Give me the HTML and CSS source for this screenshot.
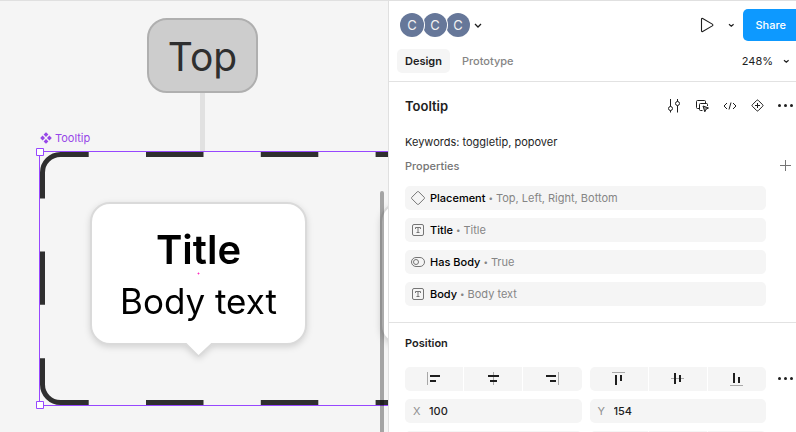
FILE: index.html
```html
<!DOCTYPE html>
<html lang="en">
<head>
<meta charset="utf-8">
<title>Tooltip</title>
<link rel="stylesheet" href="styles.css">
</head>
<body>
<div class="app">
  <main class="canvas">
    <div class="connector"></div>
    <div class="node">Top</div>
    <div class="frame-label">
      <svg width="12" height="12" viewBox="0 0 12 12" fill="currentColor"><path d="M6 .2 8.4 2.6 6 5 3.6 2.6zM6 7l2.4 2.4L6 11.800 3.600 9.400zM2.600 3.600 5 6 2.600 8.400.200 6zM9.400 3.600 11.800 6 9.400 8.400 7 6z"/></svg>
      <span>Tooltip</span>
    </div>
    <svg class="drawing" width="620" height="290" viewBox="0 140 620 290" fill="none">
      <g stroke="#2f2f2f" stroke-width="5">
        <path d="M42.500 198.500V172.500a18 18 0 0 1 18-18H88.700M42.500 251.500v53.300M42.500 358.300v26.200a18 18 0 0 0 18 18H88.700"/>
        <path d="M146 154.500H600M146 402.500H600" stroke-dasharray="57.500 57.300"/>
      </g>
      <g class="bubble">
        <path id="bubble" d="M110 203H287a19 19 0 0 1 19 19V325a19 19 0 0 1-19 19H212L198.500 356 185 344H110a19 19 0 0 1-19-19V222a19 19 0 0 1 19-19z"/>
        <use href="#bubble" x="290"/>
      </g>
      <g fill="#fff">
        <path id="face" d="M110 204H287a18 18 0 0 1 18 18V325a18 18 0 0 1-18 18H211.300L198.500 355 186.500 343H110a18 18 0 0 1-18-18V222a18 18 0 0 1 18-18z"/>
        <use href="#face" x="290"/>
      </g>
      <path d="M197.500 273.500h2M198.500 272.500v2" stroke="#ff24bd" stroke-opacity=".8"/>
      <path d="M600 151.500H39.500V405.500H600" stroke="#9747ff"/>
      <path d="M36.500 148.500h7v7h-7zM36.500 401.500h7v7h-7z" fill="#fff" stroke="#9747ff"/>
    </svg>
    <div class="tooltip-text">
      <div class="tooltip-title">Title</div>
      <div class="tooltip-body">Body text</div>
    </div>
    <div class="scrollbar"></div>
  </main>

  <aside class="panel">
    <header class="topbar">
      <div class="row people">
        <div class="avatars"><span class="avatar">C</span><span class="avatar">C</span><span class="avatar">C</span></div>
        <button class="icon small" aria-label="Collaborators"><svg width="16" height="16" viewBox="0 0 16 16"><path d="M5 7l3 3 3-3" stroke-width="1.300"/></svg></button>
        <span class="spacer"></span>
        <button class="icon play" aria-label="Present"><svg width="24" height="24" viewBox="0 0 24 24"><path d="M6.500 6.300v11.400q0 1.300 1.200.7l9.600-5.500q1.200-.9 0-1.800L7.700 5.600q-1.200-.6-1.200.7z" stroke-width="1.100"/></svg></button>
        <button class="icon small" aria-label="Present options"><svg width="16" height="16" viewBox="0 0 16 16"><path d="M6 7.200l2.300 2 2.300-2" stroke-width="1.200"/></svg></button>
        <button class="share">Share</button>
      </div>
      <div class="row tabs">
        <button class="tab active">Design</button>
        <button class="tab">Prototype</button>
        <span class="spacer"></span>
        <button class="zoom">248%<svg width="16" height="16" viewBox="0 0 16 16"><path d="M6 7.200l2.300 2 2.300-2" stroke-width="1.200"/></svg></button>
      </div>
    </header>

    <section class="component">
      <div class="row title-row">
        <h1>Tooltip</h1>
        <div class="actions">
          <button class="icon" aria-label="Configure"><svg width="22" height="22" viewBox="0 0 22 22"><path d="M8.500 4v7.500M8.500 15.500v2M15.500 10.500V17.500M15.500 4v2.500"/><circle cx="8.500" cy="13.500" r="2"/><circle cx="15.500" cy="8.500" r="2"/></svg></button>
          <button class="icon" aria-label="Select instances"><svg width="22" height="22" viewBox="0 0 22 22"><path d="M9.500 13.500h-2a1 1 0 0 1-1-1v-6a1 1 0 0 1 1-1h7a1 1 0 0 1 1 1v2M12.500 15.500h-2a1 1 0 0 1-1-1v-5a1 1 0 0 1 1-1h6a1 1 0 0 1 1 1v1.500"/><path d="M13 11l5.500 2-2.500 1.300-1.200 2.500z" fill="#999"/></svg></button>
          <button class="icon" aria-label="Dev mode"><svg width="22" height="22" viewBox="0 0 22 22"><path d="M9 8l-3 3 3 3M15 8l3 3-3 3M13 7.500l-2 7"/></svg></button>
          <button class="icon" aria-label="Create variant"><svg width="22" height="22" viewBox="0 0 22 22"><path d="M10.800 5.300q.7-.7 1.400 0l4.500 4.500q.7.7 0 1.400l-4.500 4.500q-.7.7-1.400 0L6.300 11.200q-.7-.7 0-1.400zM9 10.500h5M11.500 8v5"/></svg></button>
          <button class="icon" aria-label="More actions"><svg class="dots" width="22" height="22" viewBox="0 0 22 22"><circle cx="5.500" cy="10.500" r="1.500"/><circle cx="11.500" cy="10.500" r="1.500"/><circle cx="17.500" cy="10.500" r="1.500"/></svg></button>
        </div>
      </div>
      <p class="line">Keywords: toggletip, popover</p>
      <div class="row properties-head">
        <h2>Properties</h2>
        <button class="icon muted" aria-label="Add property"><svg width="22" height="22" viewBox="0 0 22 22"><path d="M6 10.500h11M11.500 5v11"/></svg></button>
      </div>
      <ul class="properties">
        <li><svg width="16" height="16" viewBox="0 0 16 16"><path d="M7.400 1.700q.6-.6 1.200 0l5.700 5.700q.6.6 0 1.200l-5.700 5.700q-.6.6-1.200 0L1.700 8.600q-.6-.6 0-1.200z"/></svg><span class="name">Placement</span><span class="dot">•</span><span class="value">Top, Left, Right, Bottom</span></li>
        <li><svg width="16" height="16" viewBox="0 0 16 16"><rect x="2.500" y="2.500" width="11" height="11" rx="1.500"/><path d="M5.500 7V5.500h5V7M8 5.500v5M6.500 10.500h3"/></svg><span class="name">Title</span><span class="dot">•</span><span class="value">Title</span></li>
        <li><svg width="16" height="16" viewBox="0 0 16 16"><rect x="1.500" y="3.500" width="13" height="9" rx="4.500"/><circle cx="6" cy="8" r="2.500"/></svg><span class="name">Has Body</span><span class="dot">•</span><span class="value">True</span></li>
        <li><svg width="16" height="16" viewBox="0 0 16 16"><rect x="2.500" y="2.500" width="11" height="11" rx="1.500"/><path d="M5.500 7V5.500h5V7M8 5.500v5M6.500 10.500h3"/></svg><span class="name">Body</span><span class="dot">•</span><span class="value">Body text</span></li>
      </ul>
    </section>

    <section class="position">
      <h2>Position</h2>
      <div class="controls">
        <div class="segments">
          <button aria-label="Align left"><svg width="24" height="24"><path class="guide" d="M5.500 5v13"/><path class="bar" d="M8 8h10v2H8zM8 13h6v2H8z"/></svg></button>
          <button aria-label="Align horizontal centers"><svg width="24" height="24"><path class="guide" d="M12.500 5v13"/><path class="bar" d="M7 8h11v2H7zM9 13h7v2H9z"/></svg></button>
          <button aria-label="Align right"><svg width="24" height="24"><path class="guide" d="M18.500 5v13"/><path class="bar" d="M6 8h10v2H6zM10 13h6v2h-6z"/></svg></button>
        </div>
        <div class="segments">
          <button aria-label="Align top"><svg width="24" height="24"><path class="guide" d="M5 5.500h13"/><path class="bar" d="M8 8h2v10H8zM13 8h2v6h-2z"/></svg></button>
          <button aria-label="Align vertical centers"><svg width="24" height="24"><path class="guide" d="M5 11.500h13"/><path class="bar" d="M8 6h2v11H8zM13 8h2v7h-2z"/></svg></button>
          <button aria-label="Align bottom"><svg width="24" height="24"><path class="guide" d="M5 18.500h13"/><path class="bar" d="M8 6h2v10H8zM13 10h2v6h-2z"/></svg></button>
        </div>
        <button class="icon" aria-label="More alignment options"><svg class="dots" width="22" height="22" viewBox="0 0 22 22"><circle cx="5.500" cy="10.500" r="1.500"/><circle cx="11.500" cy="10.500" r="1.500"/><circle cx="17.500" cy="10.500" r="1.500"/></svg></button>
        <div class="field"><label for="x">X</label><input id="x" value="100"></div>
        <div class="field"><label for="y">Y</label><input id="y" value="154"></div>
        <span></span>
        <div class="field"><input aria-label="Rotation"></div>
        <div class="segments"><button aria-label="Rotate"></button><button aria-label="Flip horizontal"></button><button aria-label="Flip vertical"></button></div>
      </div>
    </section>
  </aside>
</div>
</body>
</html>
```
FILE: styles.css
```css
* { box-sizing: border-box; }

body {
  margin: 0;
  font: 11px/16px Inter, "Liberation Sans", sans-serif;
  color: #1e1e1e;
}

h1, h2, p, ul { margin: 0; padding: 0; }
ul { list-style: none; }
svg { display: block; flex: none; }

button, input {
  font: inherit;
  color: inherit;
  border: 0;
  padding: 0;
  background: none;
}

.app {
  display: grid;
  grid-template-columns: minmax(0, 1fr) 408px;
  height: 100vh;
  overflow: hidden;
  border-top: 1px solid #e0e0e0;
}

/* Canvas: objects are placed freely */
.canvas {
  position: relative;
  overflow: hidden;
  background: #f5f5f5;
}

.connector {
  position: absolute;
  left: 200px;
  top: 90px;
  width: 5px;
  height: 60px;
  background: #e1e1e1;
}

.node {
  position: absolute;
  left: 147px;
  top: 17px;
  width: 111px;
  height: 75px;
  border: 2px solid #afafaf;
  border-radius: 20px;
  background: #cdcdcd;
  color: #2f2f2f;
  font-size: 39px;
  line-height: 74px;
  text-align: center;
}

.frame-label {
  position: absolute;
  left: 40px;
  top: 129px;
  display: flex;
  align-items: center;
  gap: 3px;
  color: #9747e8;
}

.drawing {
  position: absolute;
  left: 0;
  top: 139px;
}

.bubble {
  fill: #dadada;
  stroke: #dadada;
  stroke-width: 2px;
  filter: drop-shadow(0 2px 3px rgba(0, 0, 0, 0.14));
}

.tooltip-text {
  position: absolute;
  left: 92px;
  top: 225px;
  width: 213px;
  text-align: center;
  color: #000;
}

.tooltip-title {
  font-size: 40px;
  font-weight: 600;
  line-height: 48px;
}

.tooltip-body {
  font-size: 35px;
  line-height: 54px;
}

.scrollbar {
  position: absolute;
  left: 380px;
  top: 190px;
  bottom: 0;
  width: 4px;
  border-radius: 2px 2px 0 0;
  background: rgba(0, 0, 0, 0.33);
}

/* Panel */
.panel {
  overflow: hidden;
  border-left: 1px solid #e0e0e0;
  background: #fff;
}

.row {
  display: flex;
  align-items: center;
}

.spacer { flex: 1; }

.topbar {
  padding-bottom: 8px;
  border-bottom: 1px solid #e2e2e2;
}

.people {
  height: 48px;
  padding-left: 11px;
}

.avatars { display: flex; }

.avatar {
  position: relative;
  width: 24px;
  height: 24px;
  border-radius: 50%;
  background: #667799;
  box-shadow: 0 0 0 1px #fff;
  color: #f2f2f2;
  font-size: 13px;
  line-height: 24px;
  text-align: center;
}

.avatar + .avatar { margin-left: -1px; }
.avatar:nth-child(1) { z-index: 2; }
.avatar:nth-child(2) { z-index: 1; }

.icon {
  display: flex;
  align-items: center;
  justify-content: center;
  width: 22px;
  height: 22px;
}

.icon svg, .zoom svg {
  fill: none;
  stroke: #1e1e1e;
}

.icon svg.dots {
  fill: #1e1e1e;
  stroke: none;
}

.icon.muted svg { stroke: #757575; }
.icon.small { width: 16px; }

.icon.play {
  width: 28px;
  margin-right: 2px;
}

.share {
  height: 32px;
  padding: 0 10px 0 13px;
  margin-left: 4px;
  border-radius: 5px 0 0 5px;
  background: #0d99ff;
  color: #fff;
  font-weight: 500;
}

.tabs {
  gap: 4px;
  padding: 0 2px 0 8px;
}

.tab {
  height: 24px;
  padding: 0 8px;
  border-radius: 5px;
  color: #858585;
  font-weight: 500;
}

.tab.active {
  background: #f5f5f5;
  color: #1e1e1e;
  font-weight: 600;
}

.zoom {
  display: flex;
  align-items: center;
  gap: 5px;
}

.component {
  padding: 0 0 16px 16px;
  border-bottom: 1px solid #e2e2e2;
}

.title-row {
  height: 48px;
  justify-content: space-between;
}

h1 {
  font-size: 13px;
  font-weight: 600;
}

.actions {
  display: flex;
  gap: 6px;
}

.line { line-height: 24px; }

.properties-head {
  height: 24px;
  justify-content: space-between;
}

.properties-head h2 {
  font-size: 11px;
  font-weight: 500;
  color: #757575;
}

.properties {
  display: grid;
  gap: 8px;
  padding: 8px 30px 0 0;
}

.properties li {
  display: flex;
  align-items: center;
  gap: 3px;
  height: 24px;
  padding-left: 5px;
  border-radius: 5px;
  background: #f5f5f5;
}

.properties svg {
  margin-right: 1px;
  fill: none;
  stroke: #757575;
}

.name {
  color: #000;
  font-weight: 500;
}

.value, .dot { color: #858585; }
.dot { font-size: 8px; }

.position { padding-left: 16px; }

.position h2 {
  font-size: 11px;
  font-weight: 600;
  line-height: 40px;
}

.controls {
  display: grid;
  grid-template-columns: minmax(0, 1fr) minmax(0, 1fr) 22px;
  gap: 8px;
  align-items: center;
  padding-top: 4px;
}

.segments {
  display: grid;
  grid-template-columns: repeat(3, 1fr);
  gap: 1px;
  height: 24px;
  border-radius: 5px;
  overflow: hidden;
}

.segments button {
  display: flex;
  justify-content: center;
  background: #f5f5f5;
}

.guide { stroke: #a8a8a8; }
.bar { fill: #1e1e1e; }

.field {
  display: flex;
  align-items: center;
  height: 24px;
  padding-left: 8px;
  border-radius: 5px;
  background: #f5f5f5;
}

.field label {
  width: 16px;
  color: #909090;
}

.field input {
  flex: 1;
  min-width: 0;
  font-weight: 500;
}
```
